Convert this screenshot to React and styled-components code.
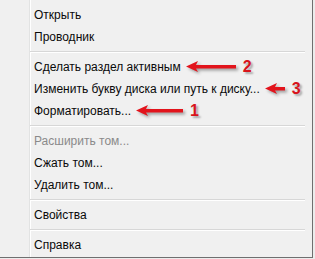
import React from 'react';
import styled, { createGlobalStyle } from 'styled-components';

const GlobalStyle = createGlobalStyle`
	html, body {
		margin: 0;
		padding: 0;
		background: #f4f4f4;
	}
`;

const Frame = styled.div`
	width: 315px;
	height: 259px;
	overflow: hidden;
	background: #ececec;
`;

const Menu = styled.div`
	box-sizing: border-box;
	width: 313px;
	height: 258px;
	padding: 4px 7px 0 0;
	display: flex;
	flex-direction: column;
	background-color: #f0f0f0;
	background-image: linear-gradient(
		to right,
		transparent 29px,
		#e2e3e3 29px,
		#e2e3e3 30px,
		#ffffff 30px,
		#ffffff 31px,
		transparent 31px
	);
	border-right: 1px solid #6f6f6f;
	border-bottom: 1px solid #6f6f6f;
	font-family: 'Liberation Sans', Arial, sans-serif;
	font-size: 12px;
`;

const Item = styled.div`
	height: 22px;
	display: flex;
	align-items: center;
	padding-left: 34px;
	color: ${props => (props.disabled ? '#8a8a8a' : '#0a0a0a')};
	white-space: nowrap;
`;

const Separator = styled.div`
	height: 8px;
	margin-left: 30px;
	display: flex;
	flex-direction: column;
	justify-content: center;

	&::before {
		content: '';
		height: 1px;
		background: #d7d7d7;
	}
	&::after {
		content: '';
		height: 1px;
		background: #ffffff;
	}
`;

const Mark = styled.span`
	display: flex;
	align-items: center;
	margin-left: ${props => props.gap}px;
`;

const Num = styled.span`
	margin-left: 4px;
	font-family: 'Liberation Sans', Arial, sans-serif;
	font-weight: bold;
	font-size: 16px;
	color: #d8141c;
	text-shadow: 2px 2px 2px rgba(0, 0, 0, 0.3);
`;

const Arrow = ({ length, label, gap = 5 }) => (
	<Mark gap={gap}>
		<svg
			width={length + 3}
			height={15}
			viewBox={`0 0 ${length + 3} 15`}
			style={{ filter: 'drop-shadow(2px 2px 1.5px rgba(0,0,0,0.35))' }}
		>
			<polygon
				points={`0,6.5 12,1 10,5 ${length},5 ${length},8.5 10,8.5 12,12`}
				fill="#e2141c"
			/>
		</svg>
		<Num>{label}</Num>
	</Mark>
);

export default function App() {
	return (
		<Frame>
			<GlobalStyle />
			<Menu>
				<Item>Открыть</Item>
				<Item>Проводник</Item>
				<Separator />
				<Item>
					Сделать раздел активным
					<Arrow length={50} label="2" />
				</Item>
				<Item>
					Изменить букву диска или путь к диску...
					<Arrow length={20} label="3" />
				</Item>
				<Item>
					Форматировать...
					<Arrow length={47} label="1" />
				</Item>
				<Separator />
				<Item disabled>Расширить том...</Item>
				<Item>Сжать том...</Item>
				<Item>Удалить том...</Item>
				<Separator />
				<Item>Свойства</Item>
				<Separator />
				<Item>Справка</Item>
			</Menu>
		</Frame>
	);
}
